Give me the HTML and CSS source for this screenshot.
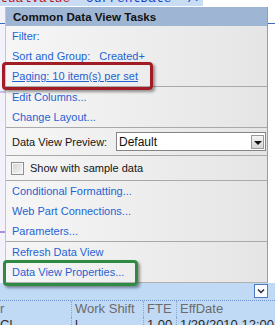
FILE: index.html
```html
<!DOCTYPE html>
<html lang="en">
<head>
  <meta charset="UTF-8">
  <title>Common Data View Tasks</title>
  <link rel="stylesheet" href="styles.css">
</head>
<body>
  <div class="screen">
    <div class="code-line">
      <div class="code-text"><span class="sel"><span class="attr">tualValue</span> <span class="val">"CurrentDate" /&gt;</span></span></div>
    </div>

    <div class="middle">
      <div class="gutter-left"></div>

      <div class="tasks">
        <div class="tasks-head">Common Data View Tasks</div>

        <div class="group">
          <a class="task">Filter:</a>
          <a class="task">Sort and Group:<span class="extra">Created+</span></a>
          <a class="task paging">Paging: 10 item(s) per set</a>
        </div>

        <div class="group">
          <a class="task">Edit Columns...</a>
          <a class="task">Change Layout...</a>
        </div>

        <div class="group preview-row">
          <span class="label">Data View Preview:</span>
          <div class="select">
            <span class="select-text">Default</span>
            <span class="select-btn"><span class="arrow"></span></span>
          </div>
        </div>

        <div class="group check-row">
          <span class="checkbox"></span>
          <span class="label">Show with sample data</span>
        </div>

        <div class="group">
          <a class="task">Conditional Formatting...</a>
          <a class="task">Web Part Connections...</a>
          <a class="task">Parameters...</a>
        </div>

        <div class="group">
          <a class="task">Refresh Data View</a>
          <a class="task">Data View Properties...</a>
        </div>
      </div>

      <div class="gutter-right"></div>
    </div>

    <div class="grid-area">
      <div class="grid-bar">
        <span class="chevron-btn">
          <svg width="12" height="12" viewBox="0 0 12 12"><path d="M3 4.5 L6 7.5 L9 4.5" fill="none" stroke="#2b2b2b" stroke-width="1.5"/></svg>
        </span>
      </div>
      <div class="grid-row grid-head">
        <span class="cell">r</span>
        <span class="cell">Work Shift</span>
        <span class="cell">FTE</span>
        <span class="cell">EffDate</span>
      </div>
      <div class="grid-row grid-data">
        <span class="cell">Cl</span>
        <span class="cell">l</span>
        <span class="cell">1.00</span>
        <span class="cell">1/29/2010 12:00 A</span>
      </div>
    </div>

    <div class="callout callout-red"></div>
    <div class="callout callout-green"></div>
  </div>
</body>
</html>
```

FILE: styles.css
```css
body {
  margin: 0;
  background: #fff;
}

.screen {
  position: relative;
  width: 275px;
  height: 325px;
  overflow: hidden;
  background: #fff;
  font-family: "Liberation Sans", Arial, sans-serif;
}

/* code editor line peeking above the panel */
.code-line {
  height: 7px;
  overflow: hidden;
}

.code-text {
  margin-top: -8px;
  font: 13px/13px "Liberation Mono", monospace;
  white-space: pre;
}

.sel {
  background: #c8ddf4;
}

.attr { color: #c0141c; }
.val { color: #1c3fc8; }

.middle {
  display: flex;
  height: 276px;
}

.gutter-left {
  width: 5px;
  background:
    linear-gradient(to bottom, transparent 16px, #3a6cc6 16px, #3a6cc6 17px, transparent 17px),
    linear-gradient(to bottom, transparent 224px, #a990dc 224px, #a990dc 226px, transparent 226px),
    linear-gradient(to bottom, transparent 84px, #c9bdea 84px, #c9bdea 86px, transparent 86px),
    #f3f1fa;
}

.gutter-right {
  flex: 1;
  background: linear-gradient(to bottom, transparent 16px, #3a6cc6 16px, #3a6cc6 17px, transparent 17px), #fff;
}

/* tasks panel */
.tasks {
  width: 263px;
  box-sizing: border-box;
  border-left: 1px solid #c6c6c6;
  border-right: 1px solid #9c9c9c;
  border-bottom: 1px solid #b0b0b0;
  background: linear-gradient(to right, #f6f6f6, #e5e5e5);
  display: flex;
  flex-direction: column;
  font-size: 11px;
}

.tasks-head {
  height: 19px;
  line-height: 19px;
  padding-left: 7px;
  background: #9eb5d3;
  font-weight: bold;
  font-size: 11.6px;
  color: #111;
}

.group {
  border-top: 1px solid #a9a9a9;
}

.group:nth-child(2) {
  border-top: none;
}

.task {
  display: block;
  height: 20px;
  line-height: 20px;
  padding-left: 6px;
  color: #1f63d3;
  white-space: nowrap;
}

.task .extra {
  margin-left: 9px;
}

.task.paging {
  text-decoration: underline;
}

.label {
  color: #151515;
}

.preview-row {
  display: flex;
  align-items: center;
  height: 27px;
  padding-left: 6px;
}

.select {
  display: flex;
  align-items: center;
  margin-left: auto;
  margin-right: 1px;
  width: 150px;
  height: 19px;
  box-sizing: border-box;
  border: 1px solid #858585;
  background: #fff;
}

.select-text {
  flex: 1;
  padding-left: 2px;
  font-size: 12px;
  color: #111;
}

.select-btn {
  display: flex;
  align-items: center;
  justify-content: center;
  width: 13px;
  height: 14px;
  margin-right: 1px;
  box-sizing: border-box;
  border: 1px solid #9a9a9a;
  background: linear-gradient(#f4f4f4, #d6d6d6);
}

.arrow {
  width: 0;
  height: 0;
  border-left: 4px solid transparent;
  border-right: 4px solid transparent;
  border-top: 4px solid #111;
  margin-top: 2px;
}

.check-row {
  display: flex;
  align-items: center;
  height: 24px;
  padding-left: 5px;
}

.checkbox {
  width: 11px;
  height: 11px;
  margin-right: 6px;
  border: 1px solid #8e8e8e;
  box-shadow: inset 0 0 0 1px #f8f8f8;
  background: linear-gradient(135deg, #d3d3d3, #f7f7f7);
}

/* list grid underneath */
.grid-area {
  height: 42px;
  background: #c0d9f5;
  font-size: 13px;
}

.grid-bar {
  display: flex;
  justify-content: flex-end;
  height: 18px;
  padding: 1px 7px 0 0;
  box-sizing: border-box;
  border-bottom: 1px dotted #6f91cf;
}

.chevron-btn {
  display: flex;
  align-items: center;
  justify-content: center;
  width: 14px;
  height: 14px;
  box-sizing: border-box;
  border: 1px solid #4f77c4;
  background: #f7faff;
}

.grid-row {
  display: grid;
  grid-template-columns: 71px 72px 33px 1fr;
  height: 16px;
  line-height: 16px;
  white-space: nowrap;
}

.grid-row .cell {
  padding-left: 3px;
  border-left: 1px dotted #8aa6d6;
}

.grid-row .cell:first-child {
  padding-left: 0;
  border-left: none;
}

.grid-head {
  color: #6b6b6b;
}

.grid-data {
  color: #2a2a2a;
}

/* annotation boxes drawn over the screenshot */
.callout {
  position: absolute;
  box-sizing: border-box;
  border-radius: 4px;
  border: 3px solid;
  box-shadow: 2px 2px 3px rgba(0, 0, 0, 0.4);
}

.callout-red {
  left: 2px;
  top: 62px;
  width: 151px;
  height: 28px;
  border-color: #a11c24;
}

.callout-green {
  left: 3px;
  top: 260px;
  width: 135px;
  height: 26px;
  border-color: #2f8a43;
}
```
